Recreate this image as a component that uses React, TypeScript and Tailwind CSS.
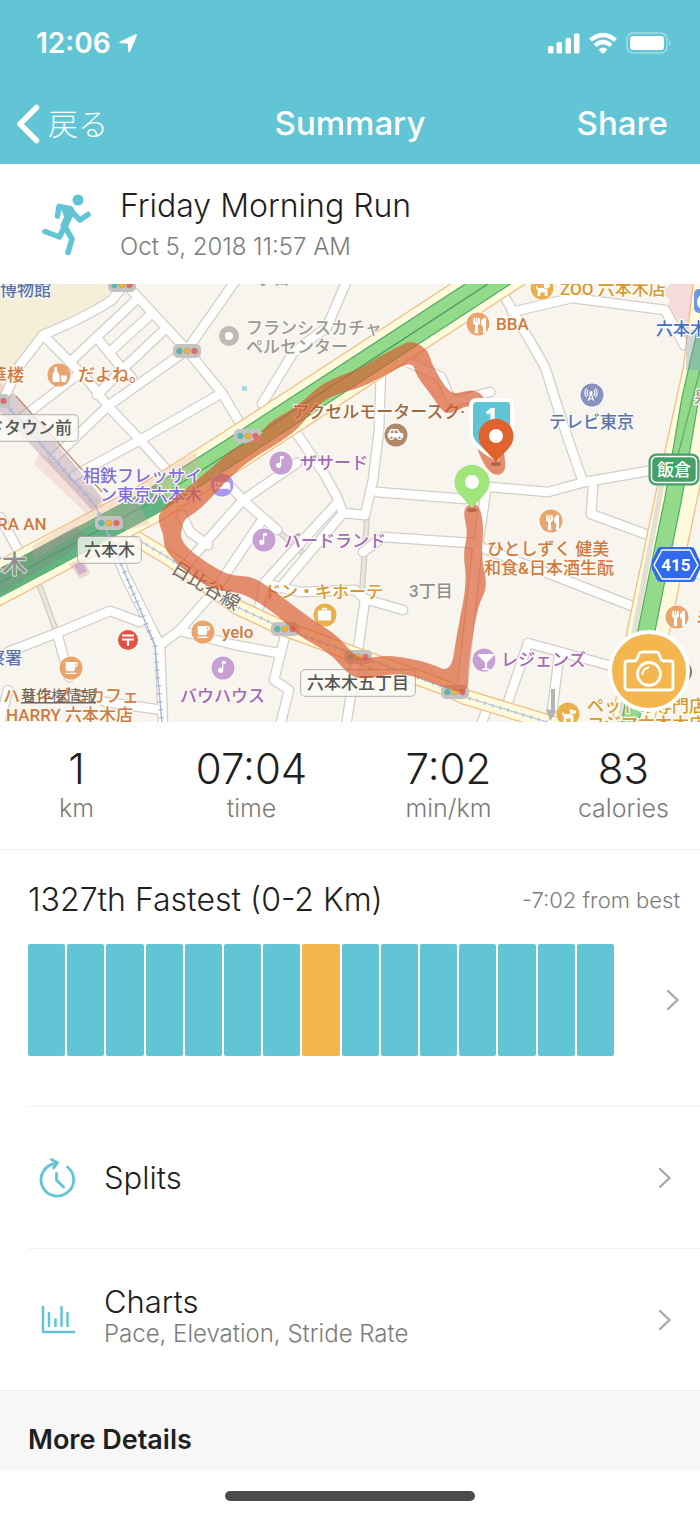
import type { ComponentType, ReactNode } from "react";
import {
  FaBed,
  FaCarSide,
  FaDog,
  FaGlassMartini,
  FaUtensils,
} from "react-icons/fa";
import { MdCellTower, MdLocalCafe, MdMusicNote, MdWork } from "react-icons/md";

const ROADS: string[] = [
  "M128 280 L112 300 Q88 316 43 335 L20 365 L2 402",
  "M122 280 L135 294 L187 350 L222 393 L238 420",
  "M187 350 L236 280",
  "M43 335 L70 362 L90 383 L108 406 L140 440 L167 470",
  "M70 362 L136 300",
  "M97 338 L120 366 L132 378",
  "M112 350 L148 317",
  "M97 395 L124 368 L162 332",
  "M187 350 L108 406 L54 458",
  "M222 393 L140 440 L74 476",
  "M23 417 L76 376",
  "M347 280 L327 327 L293 353 L262 404",
  "M293 428 L325 475 L337 497 L343 513 L365 515 L373 480 L379 430 L381 370",
  "M297 463 L243 500 L190 560",
  "M232 488 L243 500 L277 530",
  "M262 520 L215 590 L180 630 L160 645",
  "M337 503 L265 582 L258 612",
  "M343 513 L280 588",
  "M267 584 L300 592 L355 590 L365 599 L403 610",
  "M365 599 L358 650 L346 726",
  "M363 552 L383 537 L470 543 L632 606",
  "M377 492 L465 499 L490 487 L548 492 L585 482 L654 470",
  "M503 294 L545 367 L565 430 L583 482",
  "M512 312 L572 298 L665 310 L684 345",
  "M405 361 L441 377 L452 402 L490 392",
  "M593 487 L591 514 L648 535",
  "M486 490 L476 560 L462 690",
  "M506 708 L528 643 L615 667",
  "M559 656 L551 720",
  "M488 706 L480 728",
  "M182 515 L190 532 L208 545",
  "M285 636 L274 680 L289 690 L280 726",
  "M180 631 L235 645 L278 653",
  "M110 538 L125 575 L160 645 L163 726",
  "M8 652 L57 633 L110 611 L140 622",
  "M57 633 L69 677",
  "M0 517 L22 557",
  "M105 702 L162 710",
  "M0 722 L8 690",
  "M680 566 L704 576",
];

const MINOR_ROADS: string[] = [
  "M36 576 L57 633",
  "M277 530 L303 553",
  "M367 518 L362 590",
];

const YELLOW_ROAD = "M112 524 L172 560 L237 607 L280 627 L343 650 L443 687 L465 697 L560 726";
const GREEN_WEST = "M-10 588 L150 503 L235 449 L520 263";
const GREEN_EAST = "M722 270 L706 330 L690 400 L673 500 L656 583 L646 633 L629 730";
const YELLOW_EAST = "M716 270 L704 370 L675 503 L648 633 L632 730";
const SUBWAY = "M0 398 L95 505 L113 545 L155 645 L162 724";

const ROUTE_OUTLINE: [number, number][] = [
  [465, 391], [475, 390], [485, 397], [500, 432], [506, 463], [504, 473], [495, 476], [484, 466], [474, 440],
  [474, 407], [465, 406], [453, 413], [443, 413], [430, 393], [417, 377], [412, 361], [387, 374], [363, 387],
  [330, 396], [313, 410], [297, 430], [277, 444], [250, 460], [230, 477], [200, 510], [184, 519], [182, 529],
  [180, 537], [187, 548], [207, 563], [230, 576], [252, 576], [273, 590], [290, 603], [317, 623], [337, 635],
  [358, 660], [380, 656], [397, 656], [430, 663], [451, 673], [457, 633], [467, 583], [463, 553], [468, 533],
  [463, 512], [468, 504], [479, 504], [484, 526], [481, 558], [488, 587], [477, 607], [468, 667], [468, 694],
  [448, 689], [417, 677], [397, 673], [360, 680], [347, 673], [330, 653], [297, 635], [280, 617], [250, 597],
  [235, 592], [213, 590], [187, 573], [164, 550], [164, 535], [158, 522], [160, 510], [187, 488], [213, 467],
  [233, 448], [260, 438], [267, 423], [297, 407], [323, 382], [357, 370], [377, 358], [397, 347], [412, 340],
  [428, 350], [432, 365], [450, 395],
];

/** Closed outline whose corners are rounded through the midpoint of each edge. */
function smoothOutline(points: [number, number][]): string {
  const middle = (i: number) => {
    const [ax, ay] = points[i % points.length];
    const [bx, by] = points[(i + 1) % points.length];
    return `${(ax + bx) / 2} ${(ay + by) / 2}`;
  };
  const curves = points.map((_, i) => {
    const [x, y] = points[(i + 1) % points.length];
    return `Q${x} ${y} ${middle(i + 1)}`;
  });
  return `M${middle(0)} ${curves.join(" ")} Z`;
}

const ORANGE = "#cf7a3e";
const BLUE = "#5a73ae";
const PURPLE = "#a269b6";
const VIOLET = "#8270da";
const GOLD = "#d39a30";
const GRAY = "#9a9992";

type Label = { text: string; x: number; y: number; fill: string };

const LABELS: Label[] = [
  { text: "小百", x: 256, y: 284, fill: GRAY },
  { text: "博物館", x: 0, y: 296, fill: BLUE },
  { text: "フランシスカチャ", x: 246, y: 334, fill: GRAY },
  { text: "ペルセンター", x: 246, y: 353, fill: GRAY },
  { text: "華楼", x: -10, y: 381, fill: ORANGE },
  { text: "だよね。", x: 78, y: 381, fill: ORANGE },
  { text: "相鉄フレッサイ", x: 83, y: 482, fill: VIOLET },
  { text: "ン東京六本木", x: 100, y: 501, fill: VIOLET },
  { text: "アクセルモータースク·", x: 292, y: 418, fill: "#9c6b40" },
  { text: "ザサード", x: 300, y: 469, fill: PURPLE },
  { text: "バードランド", x: 284, y: 547, fill: PURPLE },
  { text: "BBA", x: 496, y: 330, fill: ORANGE },
  { text: "ZOO 六本木店", x: 560, y: 295, fill: GOLD },
  { text: "六本木", x: 656, y: 335, fill: "#466fbd" },
  { text: "テレビ東京", x: 549, y: 428, fill: BLUE },
  { text: "泉", x: 694, y: 403, fill: GRAY },
  { text: "3丁目", x: 409, y: 597, fill: "#8e8e8c" },
  { text: "ひとしずく 健美", x: 487, y: 555, fill: ORANGE },
  { text: "和食&日本酒生酛", x: 484, y: 574, fill: ORANGE },
  { text: "RA AN", x: -3, y: 530, fill: ORANGE },
  { text: "ドン・キホーテ", x: 264, y: 598, fill: GOLD },
  { text: "yelo", x: 222, y: 638, fill: ORANGE },
  { text: "バウハウス", x: 180, y: 702, fill: PURPLE },
  { text: "レジェンズ", x: 501, y: 666, fill: PURPLE },
  { text: "察署", x: -12, y: 664, fill: BLUE },
  { text: "ハリネズミカフェ", x: 3, y: 702, fill: ORANGE },
  { text: "HARRY 六本木店", x: 6, y: 721, fill: ORANGE },
  { text: "ミ", x: 695, y: 624, fill: ORANGE },
  { text: "ペットの専門店", x: 587, y: 712, fill: GOLD },
  { text: "コジマ六本木店", x: 587, y: 730, fill: GOLD },
];

type IconType = ComponentType<{ x?: number; y?: number; width?: number; height?: number; color?: string }>;
type Poi = { x: number; y: number; fill: string; icon: IconType; size: number };

const POIS: Poi[] = [
  { x: 281, y: 463, fill: "#c79fd3", icon: MdMusicNote, size: 18 },
  { x: 264, y: 540, fill: "#c79fd3", icon: MdMusicNote, size: 18 },
  { x: 223, y: 668, fill: "#c79fd3", icon: MdMusicNote, size: 18 },
  { x: 222, y: 485, fill: "#a99bf2", icon: FaBed, size: 15 },
  { x: 396, y: 435, fill: "#b0896b", icon: FaCarSide, size: 17 },
  { x: 478, y: 324, fill: "#eaa56c", icon: FaUtensils, size: 13 },
  { x: 551, y: 521, fill: "#eaa56c", icon: FaUtensils, size: 13 },
  { x: 677, y: 617, fill: "#eaa56c", icon: FaUtensils, size: 13 },
  { x: 203, y: 632, fill: "#eaa56c", icon: MdLocalCafe, size: 16 },
  { x: 71, y: 668, fill: "#eaa56c", icon: MdLocalCafe, size: 16 },
  { x: 542, y: 288, fill: "#ebb04c", icon: FaDog, size: 14 },
  { x: 568, y: 714, fill: "#ebb04c", icon: FaDog, size: 14 },
  { x: 592, y: 395, fill: "#8793be", icon: MdCellTower, size: 18 },
  { x: 325, y: 615, fill: "#ebb04c", icon: MdWork, size: 17 },
  { x: 484, y: 660, fill: "#c79fd3", icon: FaGlassMartini, size: 12 },
];

const SIGNALS: [number, number][] = [
  [122, 285],
  [187, 351],
  [248, 436],
  [109, 523],
  [285, 629],
  [358, 657],
  [455, 692],
  [-4, 401],
];

function Signal({ x, y }: { x: number; y: number }) {
  return (
    <g>
      <rect x={x - 14} y={y - 7} width="28" height="14" rx="5" fill="#c3c3c3" />
      <circle cx={x - 7.5} cy={y} r="3" fill="#50bda9" stroke="#999" strokeWidth=".5" />
      <circle cx={x} cy={y} r="3" fill="#efb52e" stroke="#999" strokeWidth=".5" />
      <circle cx={x + 7.5} cy={y} r="3" fill="#ec6660" stroke="#999" strokeWidth=".5" />
    </g>
  );
}

function StationSign({ x, y, width, text, textX }: { x: number; y: number; width: number; text: string; textX: number }) {
  return (
    <g>
      <rect x={x} y={y} width={width} height="26" rx="4" fill="#fbf9f4" fillOpacity=".75" stroke="#a9a9a9" strokeWidth="1.5" />
      <text x={textX} y={y + 19} fill="#555" stroke="none">
        {text}
      </text>
    </g>
  );
}

function Pin({ x, y, fill }: { x: number; y: number; fill: string }) {
  return (
    <g>
      <path
        d={`M${x} ${y + 26} L${x - 12} ${y + 13} A17.5 17.5 0 1 1 ${x + 12} ${y + 13} Z`}
        fill={fill}
      />
      <circle cx={x} cy={y} r="7" fill="#fff" />
    </g>
  );
}

function RunMap() {
  return (
    <svg viewBox="0 284 700 438" className="block w-full" role="img" aria-label="Run route map">
      <rect x="0" y="284" width="700" height="438" fill="#f8f5ee" />
      <path d="M0 284 H118 L105 298 L43 332 L15 370 L0 394 Z" fill="#f5efd8" />
      <path d="M0 382 L8 390 L8 400 L0 402 Z" fill="#f5cfcb" />
      <path d="M672 284 L663 292 L671 300 L668 310 L674 318 L686 336 L692 284 Z" fill="#f7dcda" stroke="#efc9c6" />

      <g fill="none" strokeLinecap="round" strokeLinejoin="round">
        {MINOR_ROADS.map((d) => (
          <path key={d} d={d} stroke="#cfccc2" strokeWidth="6" />
        ))}
        {MINOR_ROADS.map((d) => (
          <path key={d + "i"} d={d} stroke="#e9e6dc" strokeWidth="3.5" />
        ))}
        {ROADS.map((d) => (
          <path key={d} d={d} stroke="#d3cec7" strokeWidth="11" />
        ))}
        {ROADS.map((d) => (
          <path key={d + "i"} d={d} stroke="#fff" strokeWidth="8.5" />
        ))}

        <path d={YELLOW_ROAD} stroke="#f2bd85" strokeWidth="16" />
        <path d={YELLOW_ROAD} stroke="#fdfbdc" strokeWidth="13.5" />
        <path d={YELLOW_ROAD} stroke="#b3c0de" strokeWidth="1.2" />
        <path d={YELLOW_ROAD} stroke="#a9b9dd" strokeWidth="4" strokeDasharray="1 7" strokeLinecap="butt" />

        <path d={YELLOW_EAST} stroke="#f2bd85" strokeWidth="43" />
        <path d={YELLOW_EAST} stroke="#fdfbdc" strokeWidth="40.5" />
        <path d="M667 455 L659 500 L634 633 L620 722" stroke="#e2dfd3" strokeWidth="5" />
        <path d={GREEN_WEST} stroke="#f2bd85" strokeWidth="42" />
        <path d={GREEN_WEST} stroke="#fdfbdc" strokeWidth="39.5" />
        <path d={GREEN_EAST} stroke="#55ad6a" strokeWidth="18" />
        <path d={GREEN_EAST} stroke="#94da8b" strokeWidth="15.5" />
        <path d="M700 370 L678 455" stroke="#5fb070" strokeWidth="1.3" />
        <path d={GREEN_WEST} stroke="#50a968" strokeWidth="26" />
        <path d={GREEN_WEST} stroke="#94da8b" strokeWidth="23.5" />
        <path d="M-10 588 L150 503 L165 493" stroke="#62b382" strokeWidth="23.5" strokeLinecap="butt" />
        <path d={GREEN_WEST} stroke="#4b9f67" strokeWidth="1.4" />
      </g>

      <path d="M34 464 L40 452 L105 505 L150 478 L196 452 L200 468 L140 508 L150 524 L128 530 L96 522 L34 560 L32 546 L86 513 Z" fill="#e8a4a4" fillOpacity=".28" />
      <path d="M0 400 L14 393 L104 500 L92 510 L0 412 Z" fill="#a58b9a" fillOpacity=".36" />
      <path d="M0 569 L76 526 L90 540 L0 594 Z" fill="#8f7b7b" fillOpacity=".28" />
      <path d="M686 330 H700 V370 H686 Z" fill="#7b93c9" fillOpacity=".35" />
      <path d="M69 564 L84 557 L90 574 L80 579 Z" fill="#e8a4a4" fillOpacity=".4" />
      <path d="M74 565 L82 561 L87 571 L79 575 Z" fill="#b79bc9" fillOpacity=".6" />
      <g fill="none">
        <path d="M16 396 L102 492" stroke="#c08e6e" strokeWidth="1.2" />
        <path d={SUBWAY} stroke="#a9b6dd" strokeWidth="1.4" />
        <path d={SUBWAY} stroke="#a0b0dc" strokeWidth="5" strokeDasharray="1 7" />
      </g>
      <rect x="242" y="386" width="5" height="5" rx="1" fill="#a9d8ee" />
      <path d="M553 689 V712" stroke="#b5b5b5" strokeWidth="4" />
      <path d="M546 709 L557 711 L550 721 Z" fill="#b5b5b5" />

      {SIGNALS.map(([x, y]) => (
        <Signal key={`${x}-${y}`} x={x} y={y} />
      ))}

      <circle cx="229" cy="336" r="7" fill="#fff" stroke="#bdbbb3" strokeWidth="6" />
      {POIS.map(({ x, y, fill, icon: Icon, size }) => (
        <g key={`${x}-${y}`}>
          <circle cx={x} cy={y} r="12.5" fill="#fff" fillOpacity=".7" />
          <circle cx={x} cy={y} r="11.5" fill={fill} />
          <Icon x={x - size / 2} y={y - size / 2} width={size} height={size} color="#fff" />
        </g>
      ))}
      <circle cx="59" cy="375" r="11.5" fill="#eaa56c" />
      <path d="M54.500 367 H57 V371 Q59.500 374 59.500 377 V382 H52.500 V376 Q52.500 373 54.500 371 Z M60.500 375.500 H67 L66 382 H61.500 Z" fill="#fff" />
      <circle cx="128" cy="640" r="10" fill="#e25244" />
      <path d="M122 635.5 H134 M122 639.5 H134 M128 640 V646" stroke="#fff" strokeWidth="2.2" fill="none" />
      <circle cx="680" cy="672" r="12" fill="#8d765c" />
      <rect x="694" y="289" width="25" height="24" rx="5" fill="#7197e3" />
      <circle cx="706" cy="302" r="9" fill="#fff" />

      <g
        className="[font-family:Roboto,'Noto_Sans_CJK_JP',sans-serif] text-[17px] font-medium"
        stroke="#fbf9f4"
        strokeWidth="2.5"
        strokeLinejoin="round"
        paintOrder="stroke"
      >
        {LABELS.map((label) => (
          <text key={`${label.text}${label.x}-${label.y}`} x={label.x} y={label.y} fill={label.fill}>
            {label.text}
          </text>
        ))}
        <text x="-23" y="573" fill="#8e8e8e" strokeOpacity=".6" className="text-[25px]">
          本木
        </text>
        <text transform="translate(170 572) rotate(31)" fill="#6a6a6a" strokeOpacity=".5" className="text-[19px] font-normal">
          日比谷線
        </text>
        <StationSign x={-10} y={415} width={88} text="ドタウン前" textX={-13} />
        <StationSign x={78} y={537} width={63} text="六本木" textX={84} />
        <StationSign x={301} y={670} width={114} text="六本木五丁目" textX={307} />
        <a href="#copyright">
          <text x="21" y="701" fill="#666" stroke="none" className="text-[15px] font-normal underline">
            著作権情報
          </text>
        </a>
        <rect x="649" y="454" width="50" height="31" rx="7" fill="#43a066" stroke="#43a066" strokeWidth="1" />
        <rect x="651.5" y="456.5" width="45" height="26" rx="5" fill="none" stroke="#fff" strokeWidth="1.5" />
        <text x="674" y="476" textAnchor="middle" fill="#fff" stroke="none">
          飯倉
        </text>
        <path d="M661 547 H691 Q694 547 695 550 L700 561 V569 L695 580 Q694 582 691 582 H661 Q658 582 657 580 L652 569 Q651 565 652 561 L657 550 Q658 547 661 547 Z" fill="#3169ef" stroke="none" />
        <path d="M662 550 H690 L698 565 L690 579 H662 L654 565 Z" fill="none" stroke="#fff" strokeWidth="1.5" />
        <text x="676" y="571" textAnchor="middle" fill="#fff" stroke="none" className="font-bold">
          415
        </text>
      </g>

      <path d={smoothOutline(ROUTE_OUTLINE)} fill="#d95c2f" fillOpacity=".68" />

      <path d="M477 400 H507 Q512 400 512 405 V436 L497 459 Q482 452 474 442 Q471 438 471 434 V406 Q471 400 477 400 Z" fill="#5fc4d5" stroke="#fff" strokeWidth="4" strokeLinejoin="round" />
      <text x="491" y="423" textAnchor="middle" fill="#fff" className="[font-family:'Open_Sans',sans-serif] text-[21px] font-extrabold">
        1
      </text>
      <ellipse cx="496" cy="464" rx="5" ry="2" fill="#a85a3f" fillOpacity=".8" />
      <Pin x={496} y={436} fill="#e0622f" />
      <ellipse cx="472" cy="510" rx="5" ry="2" fill="#a85a3f" fillOpacity=".8" />
      <Pin x={472} y={482} fill="#a0e67d" />
    </svg>
  );
}

function Chevron() {
  return (
    <svg width="14" height="22" viewBox="0 0 14 22" fill="none" stroke="#a6a6a6" strokeWidth="2.2" className="shrink-0" aria-hidden="true">
      <path d="M2 2 L11.5 11 L2 20" strokeLinecap="round" />
    </svg>
  );
}

function Stat({ value, unit }: { value: string; unit: string }) {
  return (
    <div className="flex flex-col items-center pb-1">
      <span className="text-[42px] leading-[48px] font-light">{value}</span>
      <span className="text-[25px] leading-[30px] font-light text-[#7c7c7c]">{unit}</span>
    </div>
  );
}

function Row({ icon, title, detail }: { icon: ReactNode; title: string; detail?: string }) {
  return (
    <button type="button" className="ml-7 flex h-[142px] items-center border-t border-[#f1f1f1] pr-7 text-left">
      <span className="w-[76px] pl-2">{icon}</span>
      <span className={detail ? "flex flex-1 flex-col pb-2" : "flex flex-1 flex-col"}>
        <span className="text-[31px] leading-9 font-light">{title}</span>
        {detail && <span className="text-2xl leading-7 font-light text-[#7c7c7c]">{detail}</span>}
      </span>
      <Chevron />
    </button>
  );
}

const BAR_COUNT = 15;
const CURRENT_BAR = 7;

export default function App() {
  return (
    <div className="flex min-h-screen flex-col bg-white [font-family:Inter,'Noto_Sans_CJK_JP',sans-serif] text-[#1f1f1f]">
      <header className="bg-[#61c5d5] text-white">
        <div className="flex h-[84px] items-center justify-between pt-[2px] pr-7 pl-9">
          <div className="flex items-center gap-2">
            <span className="text-[28px] font-semibold">12:06</span>
            <svg width="18" height="19" viewBox="0 0 18 19" fill="#fff" aria-hidden="true">
              <path d="M16.500 .3 Q18.500 -.2 17.800 1.800 L11.200 17.500 Q10 19.500 9.200 17.200 L8.800 9.600 L1.500 9.300 Q-.8 8.300 1 7.400 Z" />
            </svg>
          </div>
          <div className="flex items-center gap-[9px]">
            <svg width="33" height="21" viewBox="0 0 33 21" fill="#fff" aria-hidden="true">
              <rect x="1" y="13" width="5.5" height="7.5" rx="1.5" />
              <rect x="9.5" y="9" width="5.5" height="11.5" rx="1.5" />
              <rect x="18.5" y="5" width="5.5" height="15.5" rx="1.5" />
              <rect x="27" y="0.5" width="5.5" height="20" rx="1.5" />
            </svg>
            <svg width="28" height="21" viewBox="0 0 28 21" fill="none" stroke="#fff" aria-hidden="true">
              <path d="M1.500 7.200 Q14 -3.300 26.500 7.200" strokeWidth="4.200" />
              <path d="M6 12.500 Q14 5.500 22 12.500" strokeWidth="4.200" />
              <path d="M9.500 16.500 Q14 12.500 18.500 16.500 L14 21 Z" fill="#fff" stroke="none" />
            </svg>
            <svg width="46" height="22" viewBox="0 0 46 22" aria-hidden="true">
              <rect x="1" y="1" width="40" height="20" rx="6" fill="none" stroke="#fff" strokeOpacity=".4" strokeWidth="1.5" />
              <rect x="4" y="4" width="34" height="14" rx="3" fill="#fff" />
              <path d="M43 8 Q46 11 43 14 Z" fill="#fff" fillOpacity=".5" />
            </svg>
          </div>
        </div>
        <nav className="grid h-20 grid-cols-[1fr_auto_1fr] items-center">
          <button type="button" className="flex items-center gap-2 pl-4 text-[30px] font-light">
            <svg width="24" height="40" viewBox="0 0 24 40" fill="none" stroke="#fff" strokeWidth="5.5" strokeLinecap="round" strokeLinejoin="round" aria-hidden="true">
              <path d="M20.500 3.500 L4 20 L20.500 36.500" />
            </svg>
            戻る
          </button>
          <h1 className="text-[33px] font-medium">Summary</h1>
          <button type="button" className="justify-self-end pr-8 text-[33px] font-medium">
            Share
          </button>
        </nav>
      </header>

      <section className="flex h-[120px] items-center gap-7 pl-10">
        <svg width="52" height="64" viewBox="0 0 52 64" fill="none" stroke="#61c5d5" strokeWidth="5.500" strokeLinecap="round" strokeLinejoin="round" aria-hidden="true">
          <circle cx="38" cy="8" r="5.500" fill="#61c5d5" stroke="none" />
          <path d="M17.500 24 L19 14.500 L30 16.500" />
          <path d="M21 16 L32 15 Q36 18 34 22 L28 35 L26 38 L20 34 L24 25 Z" fill="#61c5d5" stroke="none" />
          <path d="M31 19 L40 28 L48 22.500" />
          <path d="M24.500 34 L19.500 45 L5 39.500" />
          <path d="M25 35 L32 47 L28 60.500" />
        </svg>
        <div className="pt-[3px]">
          <h2 className="text-[32px] leading-[42px] font-light">Friday Morning Run</h2>
          <p className="text-2xl leading-10 font-light text-[#7c7c7c]">Oct 5, 2018 11:57 AM</p>
        </div>
      </section>

      <section className="relative">
        <RunMap />
        <button
          type="button"
          aria-label="Add photo"
          className="absolute right-[10px] bottom-[10px] flex size-[82px] items-center justify-center rounded-full border-4 border-white bg-[#f4b750]"
        >
          <svg width="52" height="44" viewBox="0 0 52 44" fill="none" stroke="#fff" strokeWidth="2.800" strokeLinecap="round" strokeLinejoin="round" aria-hidden="true">
            <path d="M4 12 H11 Q13.500 12 14.500 9 L16 5 Q17 3 19.500 3 H32.500 Q35 3 36 5 L37.500 9 Q38.500 12 41 12 H48 Q50 12 50 15 V38 Q50 41 47 41 H5 Q2 41 2 38 V15 Q2 12 4 12 Z" />
            <circle cx="26" cy="25" r="11.500" />
            <path d="M19.500 25 Q20 19.500 25.500 18.500" strokeWidth="2" />
          </svg>
        </button>
      </section>

      <section className="grid h-32 grid-cols-[7fr_9fr_9fr_7fr] items-center border-b border-[#efefef]">
        <Stat value="1" unit="km" />
        <Stat value="07:04" unit="time" />
        <Stat value="7:02" unit="min/km" />
        <Stat value="83" unit="calories" />
      </section>

      <section className="h-64 pt-[30px] pr-5 pl-7">
        <div className="flex h-10 items-center justify-between">
          <h3 className="text-[32px] font-light">1327th Fastest (0-2 Km)</h3>
          <p className="text-[22px] font-light text-[#7c7c7c]">-7:02 from best</p>
        </div>
        <div className="mt-6 flex items-center gap-[52px]">
          <div className="flex h-28 flex-1 gap-[2px]">
            {Array.from({ length: BAR_COUNT }, (_, i) => (
              <div key={i} className={i === CURRENT_BAR ? "flex-1 rounded-[2px] bg-[#f4b750]" : "flex-1 rounded-[2px] bg-[#61c5d5]"} />
            ))}
          </div>
          <Chevron />
        </div>
      </section>

      <Row
        title="Splits"
        icon={
          <svg width="42" height="42" viewBox="0 0 42 42" fill="none" stroke="#61c5d5" strokeWidth="2.800" strokeLinecap="round" strokeLinejoin="round" aria-hidden="true">
            <path d="M31.500 10 A16.300 16.300 0 1 1 20 6.500" />
            <path d="M15.500 2.500 L21.500 5.800 L17.500 11" />
            <path d="M20.500 16.500 V23 L27.500 30" />
          </svg>
        }
      />
      <Row
        title="Charts"
        detail="Pace, Elevation, Stride Rate"
        icon={
          <svg width="42" height="42" viewBox="0 0 42 42" fill="none" stroke="#61c5d5" strokeWidth="2.500" strokeLinecap="round" aria-hidden="true">
            <path d="M7 8 V33 H38" />
            <path d="M13 14 V27 M19.500 20.500 V27 M25.500 8 V27 M31.500 14 V27" />
          </svg>
        }
      />

      <section className="flex h-20 items-center border-t border-[#efefef] bg-[#f7f7f7] pt-5 pl-7">
        <h3 className="text-[27px] font-semibold">More Details</h3>
      </section>
      <footer className="flex flex-1 justify-center pt-[21px] pb-[15px]">
        <div className="h-[10px] w-[250px] rounded-full bg-[#4b4b4b]" />
      </footer>
    </div>
  );
}
